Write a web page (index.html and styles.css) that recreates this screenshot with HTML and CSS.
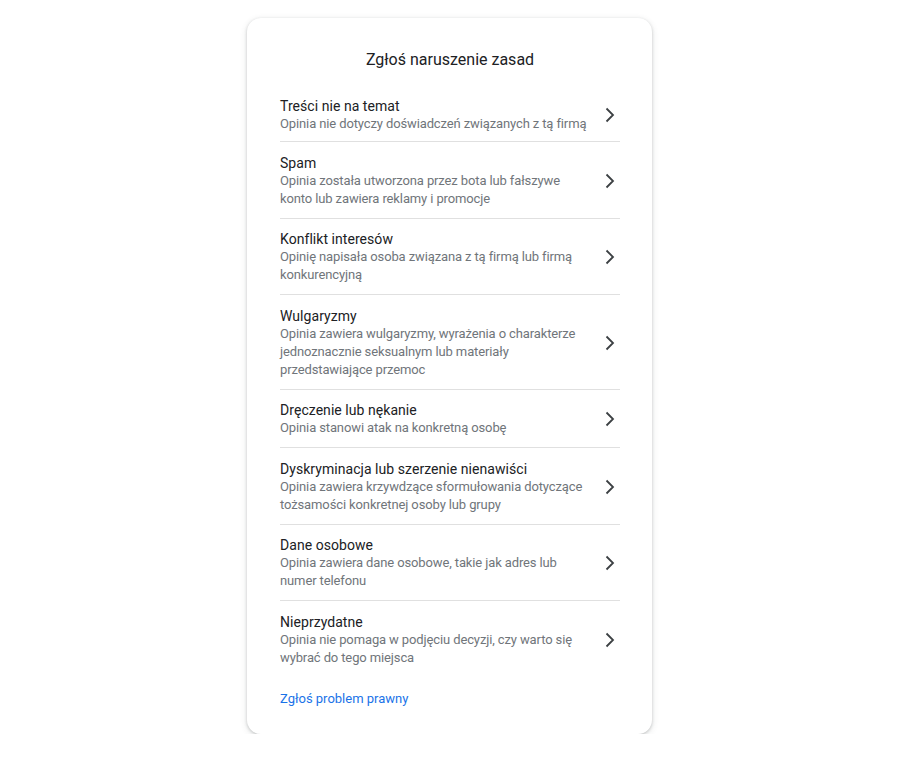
FILE: index.html
```html
<!DOCTYPE html>
<html lang="pl">
<head>
<meta charset="utf-8">
<link rel="stylesheet" href="styles.css">
</head>
<body>
<div class="page">
  <div class="card">
    <h1 class="card-title">Zgłoś naruszenie zasad</h1>
    <ul class="list">
      <li class="item">
        <div class="text">
          <div class="item-title">Treści nie na temat</div>
          <div class="item-desc">Opinia nie dotyczy doświadczeń związanych z tą firmą</div>
        </div>
        <svg class="chev" width="20" height="24" viewBox="0 0 20 24"><polyline points="6.5,5.5 13,12 6.5,18.5"/></svg>
      </li>
      <li class="item">
        <div class="text">
          <div class="item-title">Spam</div>
          <div class="item-desc">Opinia została utworzona przez bota lub fałszywe konto lub zawiera reklamy i promocje</div>
        </div>
        <svg class="chev" width="20" height="24" viewBox="0 0 20 24"><polyline points="6.5,5.5 13,12 6.5,18.5"/></svg>
      </li>
      <li class="item">
        <div class="text">
          <div class="item-title">Konflikt interesów</div>
          <div class="item-desc">Opinię napisała osoba związana z tą firmą lub firmą konkurencyjną</div>
        </div>
        <svg class="chev" width="20" height="24" viewBox="0 0 20 24"><polyline points="6.5,5.5 13,12 6.5,18.5"/></svg>
      </li>
      <li class="item">
        <div class="text">
          <div class="item-title">Wulgaryzmy</div>
          <div class="item-desc">Opinia zawiera wulgaryzmy, wyrażenia o charakterze jednoznacznie seksualnym lub materiały przedstawiające przemoc</div>
        </div>
        <svg class="chev" width="20" height="24" viewBox="0 0 20 24"><polyline points="6.5,5.5 13,12 6.5,18.5"/></svg>
      </li>
      <li class="item">
        <div class="text">
          <div class="item-title">Dręczenie lub nękanie</div>
          <div class="item-desc">Opinia stanowi atak na konkretną osobę</div>
        </div>
        <svg class="chev" width="20" height="24" viewBox="0 0 20 24"><polyline points="6.5,5.5 13,12 6.5,18.5"/></svg>
      </li>
      <li class="item">
        <div class="text">
          <div class="item-title">Dyskryminacja lub szerzenie nienawiści</div>
          <div class="item-desc">Opinia zawiera krzywdzące sformułowania dotyczące tożsamości konkretnej osoby lub grupy</div>
        </div>
        <svg class="chev" width="20" height="24" viewBox="0 0 20 24"><polyline points="6.5,5.5 13,12 6.5,18.5"/></svg>
      </li>
      <li class="item">
        <div class="text">
          <div class="item-title">Dane osobowe</div>
          <div class="item-desc">Opinia zawiera dane osobowe, takie jak adres lub numer telefonu</div>
        </div>
        <svg class="chev" width="20" height="24" viewBox="0 0 20 24"><polyline points="6.5,5.5 13,12 6.5,18.5"/></svg>
      </li>
      <li class="item">
        <div class="text">
          <div class="item-title">Nieprzydatne</div>
          <div class="item-desc">Opinia nie pomaga w podjęciu decyzji, czy warto się wybrać do tego miejsca</div>
        </div>
        <svg class="chev" width="20" height="24" viewBox="0 0 20 24"><polyline points="6.5,5.5 13,12 6.5,18.5"/></svg>
      </li>
    </ul>
    <a class="legal" href="#">Zgłoś problem prawny</a>
  </div>
</div>
</body>
</html>
```
FILE: styles.css
```css
* { box-sizing: border-box; }
html, body { margin: 0; padding: 0; background: #fff; }
body {
  font-family: Roboto, "Noto Sans", Arial, sans-serif;
  color: #202124;
}
.page {
  display: flex;
  justify-content: center;
  padding: 18px 15px 0 0;
}
.card {
  width: 405px;
  background: #fff;
  border-radius: 14px;
  box-shadow: 0 1px 3px rgba(60,64,67,0.25), 0 2px 6px 1px rgba(60,64,67,0.1);
  padding: 31px 32px 26px 33px;
}
.card-title {
  margin: 0;
  font-size: 16px;
  font-weight: 400;
  line-height: 22px;
  text-align: center;
  color: #202124;
}
.list {
  list-style: none;
  margin: 26px 0 0;
  padding: 0;
}
.item {
  display: flex;
  align-items: center;
  padding: 11.5px 0 10px;
  border-bottom: 1px solid #e0e0e0;
}
.item:first-child { padding-top: 0; padding-bottom: 8px; }
.item:last-child { border-bottom: none; }
.text { flex: 1; min-width: 0; padding-right: 12px; }
.item-title {
  font-size: 14px;
  line-height: 18px;
  color: #202124;
  letter-spacing: 0.05px;
}
.item-desc {
  font-size: 13px;
  line-height: 18px;
  color: #70757a;
  letter-spacing: -0.12px;
}
.chev {
  flex: none;
}
.chev polyline {
  fill: none;
  stroke: #3c4043;
  stroke-width: 1.8;
}
.legal {
  display: block;
  margin-top: 13.5px;
  font-size: 13px;
  line-height: 18px;
  color: #1a73e8;
  text-decoration: none;
}
```
